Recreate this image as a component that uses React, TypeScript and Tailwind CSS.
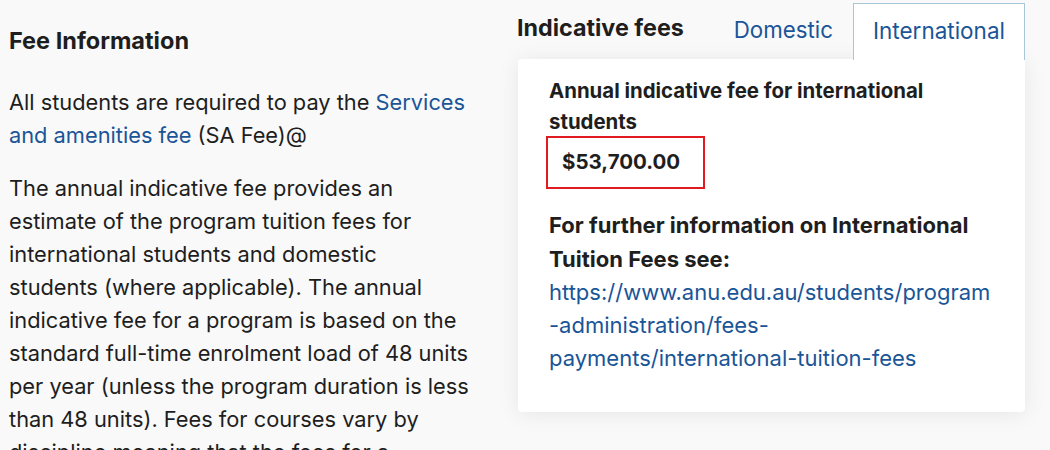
import React from "react";

export default function App() {
  return (
    <div
      className="w-[1050px] h-[450px] overflow-hidden bg-[#f9f9f9] flex text-[#1e1e1e]"
      style={{ fontFamily: "Inter, 'Open Sans', sans-serif" }}
    >
      <div className="w-[517px] shrink-0 pl-[9px] pr-[20px] pt-[26px]">
        <h2 className="text-[23.5px] leading-[30px] font-bold">Fee Information</h2>
        <p className="mt-[30px] text-[21.8px] leading-[33px]">
          All students are required to pay the{" "}
          <a className="text-[#1a5597]">Services<br />and amenities fee</a> (SA Fee)@
        </p>
        <p className="mt-[20px] text-[21.8px] leading-[33px] whitespace-nowrap">
          The annual indicative fee provides an<br />
          estimate of the program tuition fees for<br />
          international students and domestic<br />
          students (where applicable). The annual<br />
          indicative fee for a program is based on the<br />
          standard full-time enrolment load of 48 units<br />
          per year (unless the program duration is less<br />
          than 48 units). Fees for courses vary by<br />
          discipline meaning that the fees for a
        </p>
      </div>
      <div className="w-[508px] shrink-0 flex flex-col">
        <div className="flex items-end h-[59px]">
          <div className="h-[56px] flex items-center pb-[6px] text-[23.3px] font-bold whitespace-nowrap">
            Indicative fees
          </div>
          <div className="ml-auto h-[56px] px-[20px] flex items-center pb-[2px] text-[22.3px] text-[#1a5597] whitespace-nowrap">
            Domestic
          </div>
          <div className="relative z-10 h-[57px] -mb-px px-[19px] flex items-center pb-[3px] text-[22.5px] text-[#1a5597] bg-white border border-b-0 border-[#a9c6d8] whitespace-nowrap">
            International
          </div>
        </div>
        <div className="w-[507px] ml-px bg-white rounded-[4px] rounded-tr-none shadow-[0_2px_22px_rgba(0,0,0,0.08)] pl-[31px] pr-[20px] pt-[16px] pb-[37px] whitespace-nowrap">
          <div className="text-[20.4px] leading-[31px] font-bold">
            Annual indicative fee for international<br />students
          </div>
          <div className="-ml-[3px] -mt-[1px] w-[159px] h-[53px] border-2 border-[#e11b22] pl-[14px] flex items-center text-[20.5px] font-bold">
            $53,700.00
          </div>
          <div className="mt-[19px] text-[22px] leading-[34px] font-bold">
            For further information on International<br />Tuition Fees see:
          </div>
          <a className="block text-[22px] leading-[33px] text-[#1a5597]">
            https://www.anu.edu.au/students/program<br />
            -administration/fees-<br />
            payments/international-tuition-fees
          </a>
        </div>
      </div>
    </div>
  );
}
